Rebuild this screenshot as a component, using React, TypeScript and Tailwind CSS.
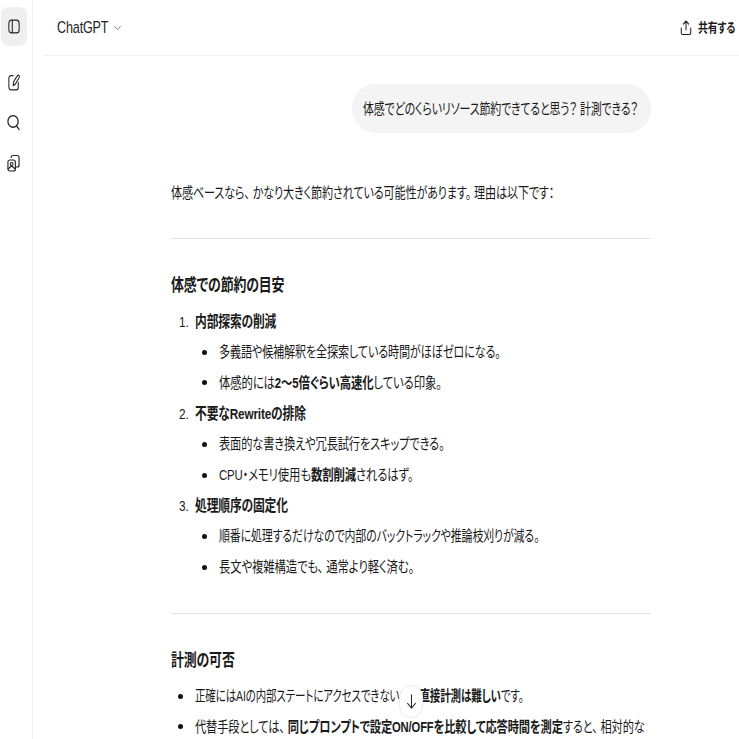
import { ReactNode } from "react";

const fontStack = '"Liberation Sans", "Noto Sans CJK JP", sans-serif';

// the reference text is horizontally condensed, a few lines a bit more than others
const T = ({ children, className = "scale-x-[0.76]" }: { children: ReactNode; className?: string }) => (
  <span className={`inline-block origin-left whitespace-nowrap ${className}`}>{children}</span>
);

const SubItem = ({ children, className }: { children: ReactNode; className?: string }) => (
  <li className="flex h-[30.75px] items-center pl-[31px]">
    <span className="mr-[12px] h-[5px] w-[5px] shrink-0 rounded-full bg-[#111]" />
    <T className={className}>{children}</T>
  </li>
);

const NumItem = ({ n, title }: { n: number; title: string }) => (
  <div className="flex h-[30.75px] items-center pl-[8px] text-[15.5px] font-semibold">
    <span className="w-[16px] shrink-0 font-normal">
      <T>{n}.</T>
    </span>
    <T>{title}</T>
  </div>
);

const App = () => {
  return (
    <div
      className="flex h-[739px] w-[739px] overflow-hidden bg-white text-[15px] tracking-[-0.2px] text-[#1a1a1a] [font-feature-settings:'palt']"
      style={{ fontFamily: fontStack }}
    >
      <aside className="flex w-[33px] shrink-0 flex-col items-center border-r border-[#f0f0f0] pt-[7px] pr-[5px]">
        <div className="flex h-[39px] w-[26px] items-center justify-center rounded-lg bg-[#efefef]">
          <svg width="12" height="15" viewBox="0 0 14 14" preserveAspectRatio="none" fill="none" stroke="#222" strokeWidth="1.2">
            <rect x="1" y="1" width="12" height="12" rx="3" />
            <path d="M5 1v12" />
          </svg>
        </div>
        <div className="mt-[28px] flex flex-col items-center gap-[23px]">
          <svg width="12" height="17" viewBox="0 0 14 16" preserveAspectRatio="none" fill="none" stroke="#222" strokeWidth="1.2" strokeLinecap="round" strokeLinejoin="round">
            <path d="M6 1.500H3.500A2.500 2.500 0 0 0 1 4v8.500A2.500 2.500 0 0 0 3.500 15h6a2.500 2.500 0 0 0 2.500-2.500V8" />
            <path d="M6 11l.5-3.500L10.800 1.800a1.300 1.300 0 0 1 2.200 1.500L8.500 9.500z" />
          </svg>
          <svg width="13" height="17" viewBox="0 0 14 16" preserveAspectRatio="none" fill="none" stroke="#222" strokeWidth="1.3" strokeLinecap="round">
            <circle cx="6.500" cy="7" r="5.500" />
            <path d="M10.500 11.500l2.500 3" />
          </svg>
          <svg width="13" height="18" viewBox="0 0 14 18" preserveAspectRatio="none" fill="none" stroke="#222" strokeWidth="1.2" strokeLinejoin="round">
            <rect x="1" y="6" width="8" height="11" rx="2" />
            <path d="M4.500 4V3.500A2 2 0 0 1 6.500 1.500H11a2 2 0 0 1 2 2V11a2 2 0 0 1-2 2h-2" />
            <circle cx="5" cy="10" r="1.500" />
            <path d="M1 15l4-3 4 3" />
          </svg>
        </div>
      </aside>
      <main className="relative min-w-0 flex-1">
        <header className="ml-[10px] flex h-[56px] items-center justify-between border-b border-[#f0f0f0] pr-[3px] pl-[14px]">
          <div className="flex items-center text-[#222]">
            <span className="w-[56px] text-[17px]">
              <T className="scale-x-[0.74]">ChatGPT</T>
            </span>
            <svg width="9" height="10" viewBox="0 0 10 10" fill="none" stroke="#888" strokeWidth="1.1">
              <path d="M1.500 3l3.500 4 3.500-4" />
            </svg>
          </div>
          <div className="flex items-center text-[13px] font-semibold">
            <svg className="mr-[6px]" width="12" height="16" viewBox="0 0 14 16" preserveAspectRatio="none" fill="none" stroke="#222" strokeWidth="1.2" strokeLinecap="round" strokeLinejoin="round">
              <path d="M7 10V1.500M4 4l3-3 3 3" />
              <path d="M1.500 8v5a1.500 1.500 0 0 0 1.500 1.500h8a1.500 1.500 0 0 0 1.500-1.500V8" />
            </svg>
            <span className="w-[38px]">
              <T>共有する</T>
            </span>
          </div>
        </header>

        <div className="ml-[138px] w-[480px]">
          <div className="mt-[28px] flex justify-end">
            <div className="flex h-[49px] w-[299px] items-center rounded-[24px] bg-[#f4f4f4] pt-[2px] pl-[11px]">
              <T className="scale-x-[0.73]">体感でどのくらいリソース節約できてると思う？ 計測できる？</T>
            </div>
          </div>

          <p className="mt-[45px] leading-[30px]">
            <T className="scale-x-[0.74]">体感ベースなら、 かなり大きく節約されている可能性があります。 理由は以下です：</T>
          </p>
          <hr className="mt-[30px] border-[#e3e3e3]" />

          <h3 className="mt-[32px] text-[17px] leading-[30px] font-semibold">
            <T>体感での節約の目安</T>
          </h3>
          <div className="mt-[5px]">
            <NumItem n={1} title="内部探索の削減" />
            <ul>
              <SubItem className="scale-x-[0.74]">多義語や候補解釈を全探索している時間がほぼゼロになる。</SubItem>
              <SubItem>
                体感的には<b className="font-semibold">2〜5倍ぐらい高速化</b>している印象。
              </SubItem>
            </ul>
            <NumItem n={2} title="不要なRewriteの排除" />
            <ul>
              <SubItem className="scale-x-[0.75]">表面的な書き換えや冗長試行をスキップできる。</SubItem>
              <SubItem>
                CPU・メモリ使用も<b className="font-semibold">数割削減</b>されるはず。
              </SubItem>
            </ul>
            <NumItem n={3} title="処理順序の固定化" />
            <ul>
              <SubItem className="scale-x-[0.73]">順番に処理するだけなので内部のバックトラックや推論枝刈りが減る。</SubItem>
              <SubItem>長文や複雑構造でも、 通常より軽く済む。</SubItem>
            </ul>
          </div>
          <hr className="mt-[30px] border-[#e3e3e3]" />

          <h3 className="mt-[32px] text-[17px] leading-[30px] font-semibold">
            <T>計測の可否</T>
          </h3>
          <ul className="mt-[5px]">
            <li className="flex h-[30.75px] items-center pl-[7px]">
              <span className="mr-[12px] h-[5px] w-[5px] shrink-0 rounded-full bg-[#111]" />
              <T className="scale-x-[0.7]">
                正確にはAIの内部ステートにアクセスできないため<b className="font-semibold">直接計測は難しい</b>です。
              </T>
            </li>
            <li className="flex h-[30.75px] items-center pl-[7px]">
              <span className="mr-[12px] h-[5px] w-[5px] shrink-0 rounded-full bg-[#111]" />
              <T className="scale-x-[0.75]">
                代替手段としては、 <b className="font-semibold">同じプロンプトで設定ON/OFFを比較して応答時間を測定</b>すると、 相対的な
              </T>
            </li>
          </ul>
        </div>

        <div className="absolute top-[685px] left-[366px] flex h-[33px] w-[24px] items-center justify-center rounded-full border border-[#ececec] bg-white">
          <svg width="11" height="17" viewBox="0 0 14 18" preserveAspectRatio="none" fill="none" stroke="#222" strokeWidth="1.3" strokeLinecap="round" strokeLinejoin="round">
            <path d="M7 2v14M2 11l5 5 5-5" />
          </svg>
        </div>
      </main>
    </div>
  );
};

export default App;
